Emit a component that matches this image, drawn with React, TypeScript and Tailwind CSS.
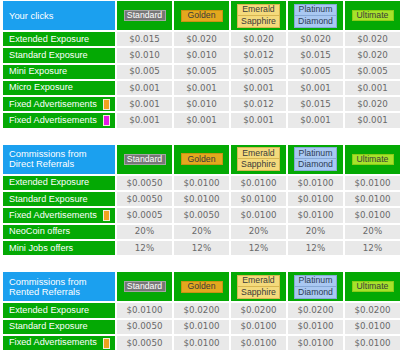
const tiers = ["Standard", "Golden", "Emerald", "Platinum", "Ultimate"];

type Row = { label: string; flag?: "orange" | "magenta"; values: string[] };
type Section = { title: string[]; rows: Row[] };

const sections: Section[] = [
  {
    title: ["Your clicks"],
    rows: [
      { label: "Extended Exposure", values: ["$0.015", "$0.020", "$0.020", "$0.020", "$0.020"] },
      { label: "Standard Exposure", values: ["$0.010", "$0.010", "$0.012", "$0.015", "$0.020"] },
      { label: "Mini Exposure", values: ["$0.005", "$0.005", "$0.005", "$0.005", "$0.005"] },
      { label: "Micro Exposure", values: ["$0.001", "$0.001", "$0.001", "$0.001", "$0.001"] },
      { label: "Fixed Advertisements", flag: "orange", values: ["$0.001", "$0.010", "$0.012", "$0.015", "$0.020"] },
      { label: "Fixed Advertisements", flag: "magenta", values: ["$0.001", "$0.001", "$0.001", "$0.001", "$0.001"] },
    ],
  },
  {
    title: ["Commissions from", "Direct Referrals"],
    rows: [
      { label: "Extended Exposure", values: ["$0.0050", "$0.0100", "$0.0100", "$0.0100", "$0.0100"] },
      { label: "Standard Exposure", values: ["$0.0050", "$0.0100", "$0.0100", "$0.0100", "$0.0100"] },
      { label: "Fixed Advertisements", flag: "orange", values: ["$0.0005", "$0.0050", "$0.0100", "$0.0100", "$0.0100"] },
      { label: "NeoCoin offers", values: ["20%", "20%", "20%", "20%", "20%"] },
      { label: "Mini Jobs offers", values: ["12%", "12%", "12%", "12%", "12%"] },
    ],
  },
  {
    title: ["Commissions from", "Rented Referrals"],
    rows: [
      { label: "Extended Exposure", values: ["$0.0100", "$0.0200", "$0.0200", "$0.0200", "$0.0200"] },
      { label: "Standard Exposure", values: ["$0.0050", "$0.0100", "$0.0100", "$0.0100", "$0.0100"] },
      { label: "Fixed Advertisements", flag: "orange", values: ["$0.0050", "$0.0100", "$0.0100", "$0.0100", "$0.0100"] },
    ],
  },
];

const badgeText = "font-['Liberation_Sans',Arial,sans-serif] text-[8.7px] leading-none";

function TierBadge({ tier }: { tier: string }) {
  if (tier === "Standard")
    return (
      <span className={`${badgeText} w-[42px] h-[11px] flex items-center justify-center bg-[#777777] border border-[#a5a5a5] text-white`}>
        Standard
      </span>
    );
  if (tier === "Golden")
    return (
      <span className={`${badgeText} w-[42px] h-[12px] flex items-center justify-center bg-[#e3a81e] border border-[#c99212] text-[#3a3a3a]`}>
        Golden
      </span>
    );
  if (tier === "Ultimate")
    return (
      <span className={`${badgeText} w-[42px] h-[11px] flex items-center justify-center bg-[#a6e32a] border border-[#8ccc18] text-[#3a3a3a]`}>
        Ultimate
      </span>
    );
  const [a, b] = tier === "Emerald" ? ["Emerald", "Sapphire"] : ["Platinum", "Diamond"];
  const tone =
    tier === "Emerald"
      ? "bg-[#f4da7c] border-[#d7b650] text-[#3a3a3a]"
      : "bg-[#a9c8f2] border-[#86a9d6] text-[#2e3d52]";
  return (
    <div className="flex flex-col w-[43px]">
      <span className={`${badgeText} ${tone} h-[12px] flex items-center justify-center border`}>{a}</span>
      <span className={`${badgeText} ${tone} h-[12px] flex items-center justify-center border border-t-0`}>{b}</span>
    </div>
  );
}

function PriceTable({ section }: { section: Section }) {
  return (
    <div className="grid grid-cols-[112px_repeat(5,1fr)] grid-rows-[29px] auto-rows-[14.3px] gap-[2px]">
      <div className="bg-[#1ba0ef] text-white pl-[6px] flex flex-col justify-center font-['Liberation_Sans',Arial,sans-serif] text-[9.4px] leading-[10px]">
        {section.title.map((t) => (
          <span key={t}>{t}</span>
        ))}
      </div>
      {tiers.map((t) => (
        <div key={t} className="bg-[#04a904] flex items-center justify-center">
          <TierBadge tier={t} />
        </div>
      ))}
      {section.rows.map((row, i) => (
        <div key={i} className="contents">
          <div className="bg-[#04a904] text-white pl-[6px] pr-[5px] flex items-center justify-between font-['Liberation_Sans',Arial,sans-serif] text-[9.2px] leading-none">
            <span>{row.label}</span>
            {row.flag && (
              <span
                className={`w-[7px] h-[11px] border border-[#f3ecd8] ${
                  row.flag === "orange" ? "bg-[#efa21e]" : "bg-[#e21ce4]"
                }`}
              />
            )}
          </div>
          {row.values.map((v, j) => (
            <div
              key={j}
              className="bg-[#e9e9e9] text-[#6a6a6a] flex items-center justify-center font-['DejaVu_Sans',Verdana,sans-serif] text-[8.7px] leading-none"
            >
              {v}
            </div>
          ))}
        </div>
      ))}
    </div>
  );
}

export default function App() {
  return (
    <div className="min-h-screen bg-white pl-[3px] pt-px flex flex-col gap-[17px]">
      {sections.map((s, i) => (
        <PriceTable key={i} section={s} />
      ))}
    </div>
  );
}
